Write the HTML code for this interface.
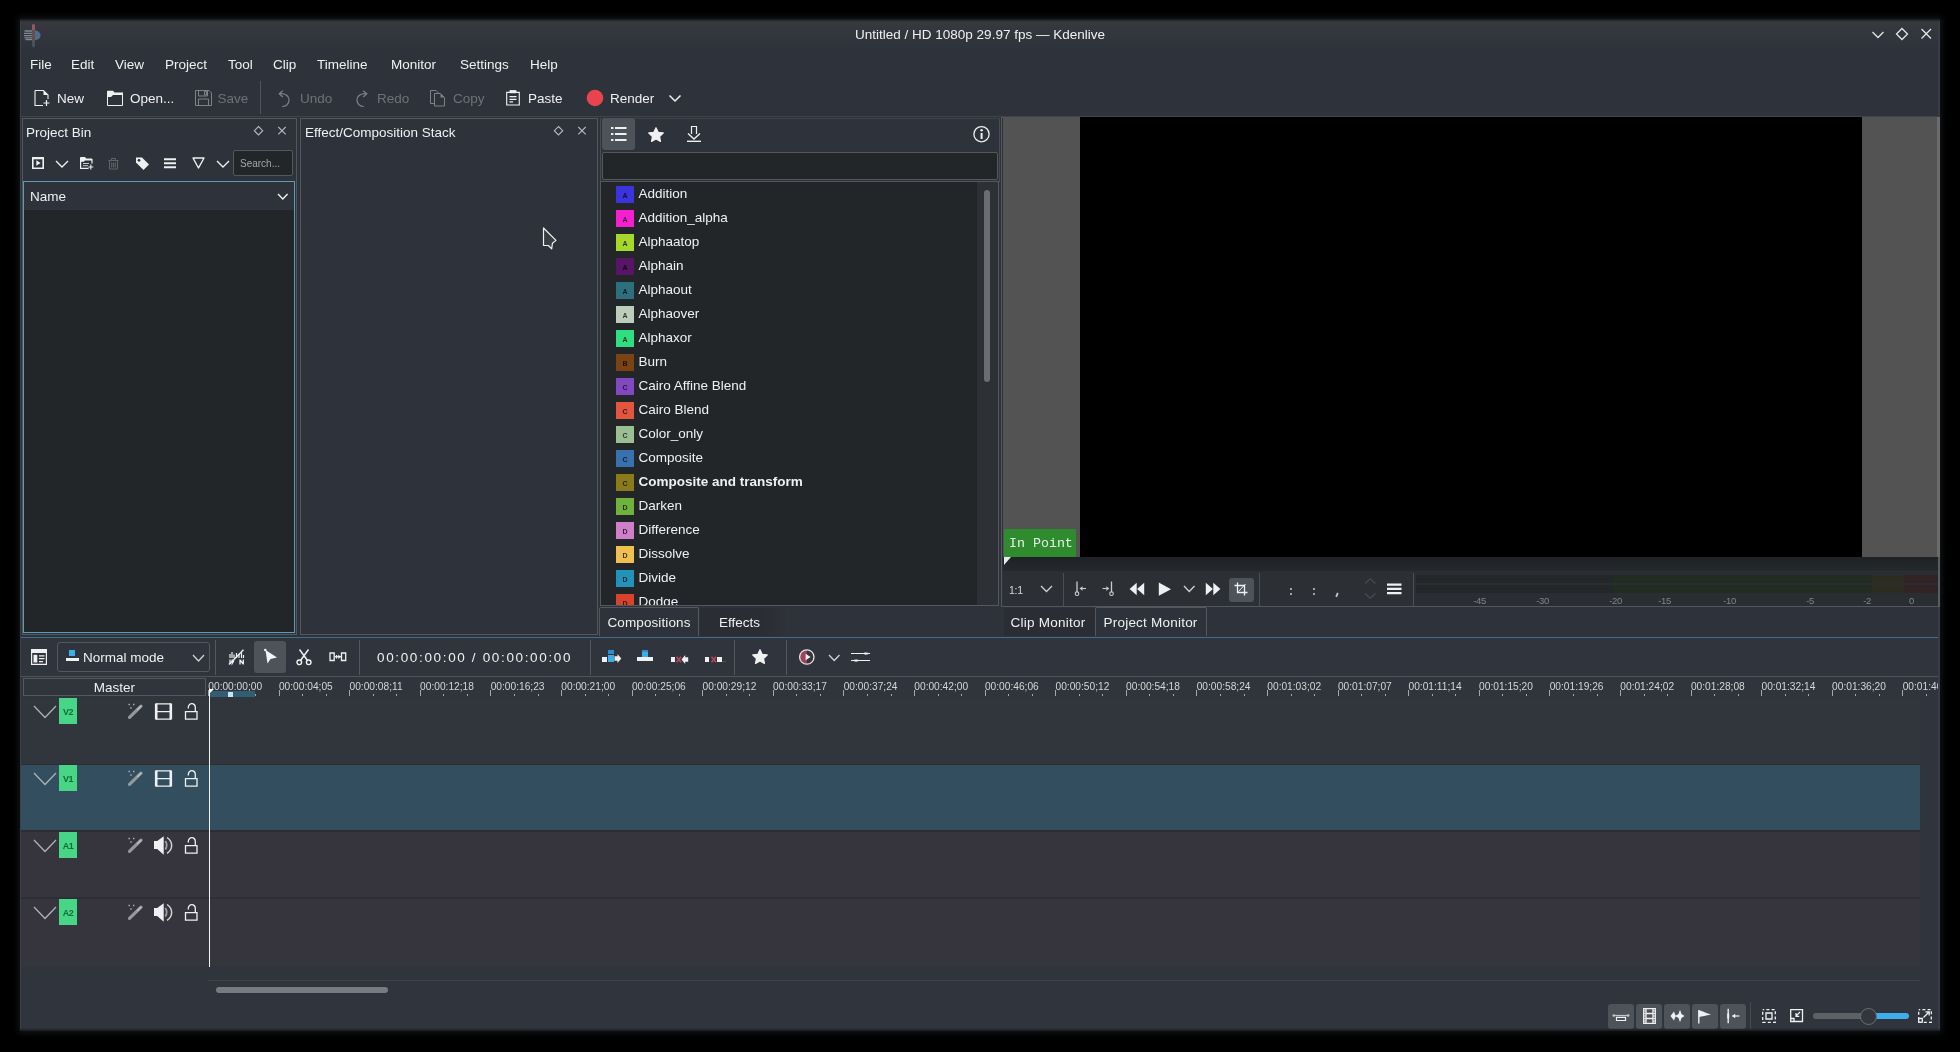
<!DOCTYPE html>
<html><head><meta charset="utf-8"><title>Kdenlive</title>
<style>
html,body{margin:0;padding:0;background:#000;}
body{width:1960px;height:1052px;overflow:hidden;position:relative;font-family:"Liberation Sans",sans-serif;}
div,svg{position:absolute;box-sizing:border-box;}
.t{white-space:nowrap;line-height:16px;height:16px;}
svg{overflow:visible;}
#root{left:0;top:0;width:1960px;height:1052px;will-change:transform;}
</style></head><body><div id="root">
<div style="left:20px;top:19px;width:1920px;height:1012px;background:#2e323a;box-shadow:0 0 6px 2px rgba(20,22,24,.9);"></div>
<div style="left:20px;top:19px;width:1920px;height:30px;background:linear-gradient(#373b40,#2e323a);"></div>
<div class="t" style="left:680px;top:27px;font-size:13.5px;color:#eff0f1;width:600px;text-align:center;">Untitled / HD 1080p 29.97 fps — Kdenlive</div>
<div class="t" style="left:30px;top:57px;font-size:13.5px;color:#eff0f1;">File</div>
<div class="t" style="left:71px;top:57px;font-size:13.5px;color:#eff0f1;">Edit</div>
<div class="t" style="left:115px;top:57px;font-size:13.5px;color:#eff0f1;">View</div>
<div class="t" style="left:165px;top:57px;font-size:13.5px;color:#eff0f1;">Project</div>
<div class="t" style="left:228px;top:57px;font-size:13.5px;color:#eff0f1;">Tool</div>
<div class="t" style="left:273px;top:57px;font-size:13.5px;color:#eff0f1;">Clip</div>
<div class="t" style="left:317px;top:57px;font-size:13.5px;color:#eff0f1;">Timeline</div>
<div class="t" style="left:391px;top:57px;font-size:13.5px;color:#eff0f1;">Monitor</div>
<div class="t" style="left:460px;top:57px;font-size:13.5px;color:#eff0f1;">Settings</div>
<div class="t" style="left:530px;top:57px;font-size:13.5px;color:#eff0f1;">Help</div>
<div class="t" style="left:57px;top:91px;font-size:13.5px;color:#eff0f1;">New</div>
<div class="t" style="left:130px;top:91px;font-size:13.5px;color:#eff0f1;">Open...</div>
<div class="t" style="left:217.5px;top:91px;font-size:13.5px;color:#6e7276;">Save</div>
<div class="t" style="left:300px;top:91px;font-size:13.5px;color:#6e7276;">Undo</div>
<div class="t" style="left:377px;top:91px;font-size:13.5px;color:#6e7276;">Redo</div>
<div class="t" style="left:453px;top:91px;font-size:13.5px;color:#6e7276;">Copy</div>
<div class="t" style="left:528px;top:91px;font-size:13.5px;color:#eff0f1;">Paste</div>
<div class="t" style="left:610px;top:91px;font-size:13.5px;color:#eff0f1;">Render</div>
<div style="left:260px;top:81px;width:1px;height:33px;background:#50555b;"></div>
<div style="left:20px;top:116px;width:1920px;height:1px;background:#3f4449;"></div>
<div style="left:22px;top:118px;width:275px;height:517px;border:1px solid #54585c;"></div>
<div class="t" style="left:26px;top:125px;font-size:13.5px;color:#eff0f1;">Project Bin</div>
<div style="left:233px;top:150px;width:60px;height:26px;background:#232629;border:1px solid #54585c;border-radius:2px;"></div>
<div class="t" style="left:240px;top:155.5px;font-size:10px;color:#a3a6a9;">Search...</div>
<div style="left:23px;top:181px;width:272px;height:452px;background:#232629;border:1px solid #5f9ab5;"></div>
<div style="left:24px;top:182px;width:270px;height:28px;background:#2e323a;"></div>
<div class="t" style="left:30px;top:189px;font-size:13.5px;color:#eff0f1;">Name</div>
<div style="left:300px;top:118px;width:298px;height:517px;border:1px solid #54585c;"></div>
<div class="t" style="left:305px;top:125px;font-size:13.5px;color:#eff0f1;">Effect/Composition Stack</div>
<div style="left:600px;top:118px;width:1px;height:64px;background:#484c52;"></div>
<div style="left:999px;top:118px;width:1px;height:64px;background:#484c52;"></div>
<div style="left:600px;top:118px;width:400px;height:1px;background:#3f4349;"></div>
<div style="left:602px;top:118px;width:33px;height:32px;background:#4e535a;border-radius:3px;"></div>
<div style="left:602px;top:152px;width:396px;height:28px;background:#232629;border:1px solid #54585c;border-radius:2px;"></div>
<div style="left:600px;top:181px;width:399px;height:425px;border:1px solid #54585c;"></div>
<div style="left:601px;top:182px;width:376px;height:423px;background:#232629;"></div>
<div style="left:977px;top:182px;width:21px;height:423px;background:#2d3135;"></div>
<div style="left:984px;top:190px;width:6px;height:192px;background:#6a6e72;border-radius:3px;"></div>
<div style="left:601px;top:182px;width:376px;height:423px;overflow:hidden;">
<div style="left:15px;top:4px;width:18px;height:17px;background:#3b34dd;"></div>
<div class="t" style="left:15px;width:18px;text-align:center;top:8.5px;font-size:7px;font-weight:bold;color:rgba(0,0,0,.75);line-height:9px;height:9px;">A</div>
<div class="t" style="left:37.5px;top:4px;font-size:13.5px;color:#eff0f1;">Addition</div>
<div style="left:15px;top:28px;width:18px;height:17px;background:#f31fd0;"></div>
<div class="t" style="left:15px;width:18px;text-align:center;top:32.5px;font-size:7px;font-weight:bold;color:rgba(0,0,0,.75);line-height:9px;height:9px;">A</div>
<div class="t" style="left:37.5px;top:28px;font-size:13.5px;color:#eff0f1;">Addition_alpha</div>
<div style="left:15px;top:52px;width:18px;height:17px;background:#a6d82c;"></div>
<div class="t" style="left:15px;width:18px;text-align:center;top:56.5px;font-size:7px;font-weight:bold;color:rgba(0,0,0,.75);line-height:9px;height:9px;">A</div>
<div class="t" style="left:37.5px;top:52px;font-size:13.5px;color:#eff0f1;">Alphaatop</div>
<div style="left:15px;top:76px;width:18px;height:17px;background:#571566;"></div>
<div class="t" style="left:15px;width:18px;text-align:center;top:80.5px;font-size:7px;font-weight:bold;color:rgba(0,0,0,.75);line-height:9px;height:9px;">A</div>
<div class="t" style="left:37.5px;top:76px;font-size:13.5px;color:#eff0f1;">Alphain</div>
<div style="left:15px;top:100px;width:18px;height:17px;background:#2d6f7d;"></div>
<div class="t" style="left:15px;width:18px;text-align:center;top:104.5px;font-size:7px;font-weight:bold;color:rgba(0,0,0,.75);line-height:9px;height:9px;">A</div>
<div class="t" style="left:37.5px;top:100px;font-size:13.5px;color:#eff0f1;">Alphaout</div>
<div style="left:15px;top:124px;width:18px;height:17px;background:#bdcdbb;"></div>
<div class="t" style="left:15px;width:18px;text-align:center;top:128.5px;font-size:7px;font-weight:bold;color:rgba(0,0,0,.75);line-height:9px;height:9px;">A</div>
<div class="t" style="left:37.5px;top:124px;font-size:13.5px;color:#eff0f1;">Alphaover</div>
<div style="left:15px;top:148px;width:18px;height:17px;background:#2fde80;"></div>
<div class="t" style="left:15px;width:18px;text-align:center;top:152.5px;font-size:7px;font-weight:bold;color:rgba(0,0,0,.75);line-height:9px;height:9px;">A</div>
<div class="t" style="left:37.5px;top:148px;font-size:13.5px;color:#eff0f1;">Alphaxor</div>
<div style="left:15px;top:172px;width:18px;height:17px;background:#7a4313;"></div>
<div class="t" style="left:15px;width:18px;text-align:center;top:176.5px;font-size:7px;font-weight:bold;color:rgba(0,0,0,.75);line-height:9px;height:9px;">B</div>
<div class="t" style="left:37.5px;top:172px;font-size:13.5px;color:#eff0f1;">Burn</div>
<div style="left:15px;top:196px;width:18px;height:17px;background:#8148c0;"></div>
<div class="t" style="left:15px;width:18px;text-align:center;top:200.5px;font-size:7px;font-weight:bold;color:rgba(0,0,0,.75);line-height:9px;height:9px;">C</div>
<div class="t" style="left:37.5px;top:196px;font-size:13.5px;color:#eff0f1;">Cairo Affine Blend</div>
<div style="left:15px;top:220px;width:18px;height:17px;background:#e2553e;"></div>
<div class="t" style="left:15px;width:18px;text-align:center;top:224.5px;font-size:7px;font-weight:bold;color:rgba(0,0,0,.75);line-height:9px;height:9px;">C</div>
<div class="t" style="left:37.5px;top:220px;font-size:13.5px;color:#eff0f1;">Cairo Blend</div>
<div style="left:15px;top:244px;width:18px;height:17px;background:#9bbf93;"></div>
<div class="t" style="left:15px;width:18px;text-align:center;top:248.5px;font-size:7px;font-weight:bold;color:rgba(0,0,0,.75);line-height:9px;height:9px;">C</div>
<div class="t" style="left:37.5px;top:244px;font-size:13.5px;color:#eff0f1;">Color_only</div>
<div style="left:15px;top:268px;width:18px;height:17px;background:#3870b0;"></div>
<div class="t" style="left:15px;width:18px;text-align:center;top:272.5px;font-size:7px;font-weight:bold;color:rgba(0,0,0,.75);line-height:9px;height:9px;">C</div>
<div class="t" style="left:37.5px;top:268px;font-size:13.5px;color:#eff0f1;">Composite</div>
<div style="left:15px;top:292px;width:18px;height:17px;background:#8a7a1a;"></div>
<div class="t" style="left:15px;width:18px;text-align:center;top:296.5px;font-size:7px;font-weight:bold;color:rgba(0,0,0,.75);line-height:9px;height:9px;">C</div>
<div class="t" style="left:37.5px;top:292px;font-size:13.5px;color:#eff0f1;font-weight:bold;">Composite and transform</div>
<div style="left:15px;top:316px;width:18px;height:17px;background:#6fb33c;"></div>
<div class="t" style="left:15px;width:18px;text-align:center;top:320.5px;font-size:7px;font-weight:bold;color:rgba(0,0,0,.75);line-height:9px;height:9px;">D</div>
<div class="t" style="left:37.5px;top:316px;font-size:13.5px;color:#eff0f1;">Darken</div>
<div style="left:15px;top:340px;width:18px;height:17px;background:#cf7fca;"></div>
<div class="t" style="left:15px;width:18px;text-align:center;top:344.5px;font-size:7px;font-weight:bold;color:rgba(0,0,0,.75);line-height:9px;height:9px;">D</div>
<div class="t" style="left:37.5px;top:340px;font-size:13.5px;color:#eff0f1;">Difference</div>
<div style="left:15px;top:364px;width:18px;height:17px;background:#efbf4f;"></div>
<div class="t" style="left:15px;width:18px;text-align:center;top:368.5px;font-size:7px;font-weight:bold;color:rgba(0,0,0,.75);line-height:9px;height:9px;">D</div>
<div class="t" style="left:37.5px;top:364px;font-size:13.5px;color:#eff0f1;">Dissolve</div>
<div style="left:15px;top:388px;width:18px;height:17px;background:#2392b8;"></div>
<div class="t" style="left:15px;width:18px;text-align:center;top:392.5px;font-size:7px;font-weight:bold;color:rgba(0,0,0,.75);line-height:9px;height:9px;">D</div>
<div class="t" style="left:37.5px;top:388px;font-size:13.5px;color:#eff0f1;">Divide</div>
<div style="left:15px;top:412px;width:18px;height:17px;background:#d8432c;"></div>
<div class="t" style="left:15px;width:18px;text-align:center;top:416.5px;font-size:7px;font-weight:bold;color:rgba(0,0,0,.75);line-height:9px;height:9px;">D</div>
<div class="t" style="left:37.5px;top:412px;font-size:13.5px;color:#eff0f1;">Dodge</div>
</div>
<div style="left:599px;top:607px;width:100px;height:29px;border:1px solid #54585c;border-bottom:none;border-radius:2px 2px 0 0;"></div>
<div style="left:700px;top:608px;width:90px;height:28px;background:linear-gradient(90deg,#2a2d33 70%,#2f333a);"></div>
<div class="t" style="left:607.5px;top:615px;font-size:13.5px;color:#eff0f1;letter-spacing:0.1px;">Compositions</div>
<div class="t" style="left:719px;top:615px;font-size:13.5px;color:#eff0f1;">Effects</div>
<div style="left:1001px;top:117px;width:938px;height:490px;border:1px solid #54585c;"></div>
<div style="left:1003px;top:117px;width:936px;height:440px;background:#535353;"></div>
<div style="left:1080px;top:117px;width:782px;height:440px;background:#000;"></div>
<div style="left:1004px;top:529px;width:72px;height:28px;background:#2e8b2e;"></div>
<div class="t" style="left:1009px;top:536px;font-size:13.3px;color:#e8f5e8;font-family:'Liberation Mono',monospace;">In Point</div>
<div style="left:1003px;top:557px;width:936px;height:14px;background:linear-gradient(#1f2224,#26292c);"></div>
<div style="left:1003px;top:571px;width:936px;height:35px;background:#2c3034;"></div>
<div style="left:1414px;top:572px;width:525px;height:34px;background:#2a2e32;"></div>
<div style="left:1229px;top:578px;width:25px;height:24px;background:#4e535a;border-radius:3px;"></div>
<div style="left:1004px;top:608px;width:91px;height:28px;background:#2a2d33;"></div>
<div class="t" style="left:1010.5px;top:615px;font-size:13.5px;color:#eff0f1;letter-spacing:0.25px;">Clip Monitor</div>
<div style="left:1095px;top:607px;width:112px;height:29px;border:1px solid #54585c;border-bottom:none;border-radius:2px 2px 0 0;"></div>
<div class="t" style="left:1103.5px;top:615px;font-size:13.5px;color:#eff0f1;letter-spacing:0.22px;">Project Monitor</div>
<div style="left:20px;top:638px;width:1920px;height:393px;background:#30343c;"></div>
<div style="left:20px;top:637px;width:1920px;height:1px;background:#3f6f8e;"></div>
<div style="left:57px;top:642px;width:153px;height:30px;border:1px solid #54585c;border-radius:3px;"></div>
<div class="t" style="left:83px;top:650px;font-size:13.5px;color:#eff0f1;">Normal mode</div>
<div style="left:254px;top:641px;width:32px;height:32px;background:#4e535a;border-radius:3px;"></div>
<div class="t" style="left:377px;top:650px;font-size:13.5px;color:#eff0f1;letter-spacing:1.65px;">00:00:00:00 / 00:00:00:00</div>
<div style="left:215px;top:640px;width:1px;height:35px;background:#53585d;"></div>
<div style="left:359px;top:640px;width:1px;height:35px;background:#53585d;"></div>
<div style="left:590px;top:640px;width:1px;height:35px;background:#53585d;"></div>
<div style="left:734px;top:640px;width:1px;height:35px;background:#53585d;"></div>
<div style="left:786px;top:640px;width:1px;height:35px;background:#53585d;"></div>
<div style="left:20px;top:676px;width:1920px;height:1px;background:#4f5459;"></div>
<div style="left:23px;top:678px;width:183px;height:18px;border:1px solid #54585c;"></div>
<div class="t" style="left:23px;top:680px;font-size:13.5px;color:#eff0f1;width:183px;text-align:center;">Master</div>
<div style="left:20px;top:698px;width:1900px;height:66px;background:#31353c;"></div>
<div style="left:20px;top:764px;width:1900px;height:1px;background:#2a2e32;"></div>
<div style="left:20px;top:765px;width:1900px;height:65px;background:#334e5e;"></div>
<div style="left:20px;top:830px;width:1900px;height:2px;background:#2a2e33;"></div>
<div style="left:20px;top:832px;width:1900px;height:65px;background:#36353e;"></div>
<div style="left:20px;top:897px;width:1900px;height:2px;background:#2d2e36;"></div>
<div style="left:20px;top:899px;width:1900px;height:62px;background:#36353e;"></div>
<div style="left:20px;top:961px;width:1900px;height:5px;background:#33363d;"></div>
<div style="left:208.8px;top:689px;width:1.6px;height:278px;background:#f2f3f4;"></div>
<div style="left:208px;top:678px;width:1732px;height:20px;overflow:hidden;">
<div class="t" style="left:0.3px;top:1px;font-size:10.2px;color:#d4d6d8;">00:00:00;00</div>
<div style="left:0.0px;top:11.5px;width:1px;height:6.5px;background:#a4a7aa;"></div>
<div style="left:23.5px;top:15.5px;width:1px;height:2.5px;background:#a4a7aa;"></div>
<div style="left:47.1px;top:15.5px;width:1px;height:2.5px;background:#a4a7aa;"></div>
<div class="t" style="left:70.9px;top:1px;font-size:10.2px;color:#d4d6d8;">00:00:04;05</div>
<div style="left:70.6px;top:11.5px;width:1px;height:6.5px;background:#a4a7aa;"></div>
<div style="left:94.1px;top:15.5px;width:1px;height:2.5px;background:#a4a7aa;"></div>
<div style="left:117.7px;top:15.5px;width:1px;height:2.5px;background:#a4a7aa;"></div>
<div class="t" style="left:141.5px;top:1px;font-size:10.2px;color:#d4d6d8;">00:00:08;11</div>
<div style="left:141.2px;top:11.5px;width:1px;height:6.5px;background:#a4a7aa;"></div>
<div style="left:164.7px;top:15.5px;width:1px;height:2.5px;background:#a4a7aa;"></div>
<div style="left:188.3px;top:15.5px;width:1px;height:2.5px;background:#a4a7aa;"></div>
<div class="t" style="left:212.1px;top:1px;font-size:10.2px;color:#d4d6d8;">00:00:12;18</div>
<div style="left:211.8px;top:11.5px;width:1px;height:6.5px;background:#a4a7aa;"></div>
<div style="left:235.3px;top:15.5px;width:1px;height:2.5px;background:#a4a7aa;"></div>
<div style="left:258.9px;top:15.5px;width:1px;height:2.5px;background:#a4a7aa;"></div>
<div class="t" style="left:282.7px;top:1px;font-size:10.2px;color:#d4d6d8;">00:00:16;23</div>
<div style="left:282.4px;top:11.5px;width:1px;height:6.5px;background:#a4a7aa;"></div>
<div style="left:305.9px;top:15.5px;width:1px;height:2.5px;background:#a4a7aa;"></div>
<div style="left:329.5px;top:15.5px;width:1px;height:2.5px;background:#a4a7aa;"></div>
<div class="t" style="left:353.3px;top:1px;font-size:10.2px;color:#d4d6d8;">00:00:21;00</div>
<div style="left:353.0px;top:11.5px;width:1px;height:6.5px;background:#a4a7aa;"></div>
<div style="left:376.5px;top:15.5px;width:1px;height:2.5px;background:#a4a7aa;"></div>
<div style="left:400.1px;top:15.5px;width:1px;height:2.5px;background:#a4a7aa;"></div>
<div class="t" style="left:423.9px;top:1px;font-size:10.2px;color:#d4d6d8;">00:00:25;06</div>
<div style="left:423.6px;top:11.5px;width:1px;height:6.5px;background:#a4a7aa;"></div>
<div style="left:447.1px;top:15.5px;width:1px;height:2.5px;background:#a4a7aa;"></div>
<div style="left:470.7px;top:15.5px;width:1px;height:2.5px;background:#a4a7aa;"></div>
<div class="t" style="left:494.5px;top:1px;font-size:10.2px;color:#d4d6d8;">00:00:29;12</div>
<div style="left:494.2px;top:11.5px;width:1px;height:6.5px;background:#a4a7aa;"></div>
<div style="left:517.7px;top:15.5px;width:1px;height:2.5px;background:#a4a7aa;"></div>
<div style="left:541.3px;top:15.5px;width:1px;height:2.5px;background:#a4a7aa;"></div>
<div class="t" style="left:565.1px;top:1px;font-size:10.2px;color:#d4d6d8;">00:00:33;17</div>
<div style="left:564.8px;top:11.5px;width:1px;height:6.5px;background:#a4a7aa;"></div>
<div style="left:588.3px;top:15.5px;width:1px;height:2.5px;background:#a4a7aa;"></div>
<div style="left:611.9px;top:15.5px;width:1px;height:2.5px;background:#a4a7aa;"></div>
<div class="t" style="left:635.7px;top:1px;font-size:10.2px;color:#d4d6d8;">00:00:37;24</div>
<div style="left:635.4px;top:11.5px;width:1px;height:6.5px;background:#a4a7aa;"></div>
<div style="left:658.9px;top:15.5px;width:1px;height:2.5px;background:#a4a7aa;"></div>
<div style="left:682.5px;top:15.5px;width:1px;height:2.5px;background:#a4a7aa;"></div>
<div class="t" style="left:706.3px;top:1px;font-size:10.2px;color:#d4d6d8;">00:00:42;00</div>
<div style="left:706.0px;top:11.5px;width:1px;height:6.5px;background:#a4a7aa;"></div>
<div style="left:729.5px;top:15.5px;width:1px;height:2.5px;background:#a4a7aa;"></div>
<div style="left:753.1px;top:15.5px;width:1px;height:2.5px;background:#a4a7aa;"></div>
<div class="t" style="left:776.9px;top:1px;font-size:10.2px;color:#d4d6d8;">00:00:46;06</div>
<div style="left:776.6px;top:11.5px;width:1px;height:6.5px;background:#a4a7aa;"></div>
<div style="left:800.1px;top:15.5px;width:1px;height:2.5px;background:#a4a7aa;"></div>
<div style="left:823.7px;top:15.5px;width:1px;height:2.5px;background:#a4a7aa;"></div>
<div class="t" style="left:847.5px;top:1px;font-size:10.2px;color:#d4d6d8;">00:00:50;12</div>
<div style="left:847.2px;top:11.5px;width:1px;height:6.5px;background:#a4a7aa;"></div>
<div style="left:870.7px;top:15.5px;width:1px;height:2.5px;background:#a4a7aa;"></div>
<div style="left:894.3px;top:15.5px;width:1px;height:2.5px;background:#a4a7aa;"></div>
<div class="t" style="left:918.1px;top:1px;font-size:10.2px;color:#d4d6d8;">00:00:54;18</div>
<div style="left:917.8px;top:11.5px;width:1px;height:6.5px;background:#a4a7aa;"></div>
<div style="left:941.3px;top:15.5px;width:1px;height:2.5px;background:#a4a7aa;"></div>
<div style="left:964.9px;top:15.5px;width:1px;height:2.5px;background:#a4a7aa;"></div>
<div class="t" style="left:988.7px;top:1px;font-size:10.2px;color:#d4d6d8;">00:00:58;24</div>
<div style="left:988.4px;top:11.5px;width:1px;height:6.5px;background:#a4a7aa;"></div>
<div style="left:1011.9px;top:15.5px;width:1px;height:2.5px;background:#a4a7aa;"></div>
<div style="left:1035.5px;top:15.5px;width:1px;height:2.5px;background:#a4a7aa;"></div>
<div class="t" style="left:1059.3px;top:1px;font-size:10.2px;color:#d4d6d8;">00:01:03;02</div>
<div style="left:1059.0px;top:11.5px;width:1px;height:6.5px;background:#a4a7aa;"></div>
<div style="left:1082.5px;top:15.5px;width:1px;height:2.5px;background:#a4a7aa;"></div>
<div style="left:1106.1px;top:15.5px;width:1px;height:2.5px;background:#a4a7aa;"></div>
<div class="t" style="left:1129.9px;top:1px;font-size:10.2px;color:#d4d6d8;">00:01:07;07</div>
<div style="left:1129.6px;top:11.5px;width:1px;height:6.5px;background:#a4a7aa;"></div>
<div style="left:1153.1px;top:15.5px;width:1px;height:2.5px;background:#a4a7aa;"></div>
<div style="left:1176.7px;top:15.5px;width:1px;height:2.5px;background:#a4a7aa;"></div>
<div class="t" style="left:1200.5px;top:1px;font-size:10.2px;color:#d4d6d8;">00:01:11;14</div>
<div style="left:1200.2px;top:11.5px;width:1px;height:6.5px;background:#a4a7aa;"></div>
<div style="left:1223.7px;top:15.5px;width:1px;height:2.5px;background:#a4a7aa;"></div>
<div style="left:1247.3px;top:15.5px;width:1px;height:2.5px;background:#a4a7aa;"></div>
<div class="t" style="left:1271.1px;top:1px;font-size:10.2px;color:#d4d6d8;">00:01:15;20</div>
<div style="left:1270.8px;top:11.5px;width:1px;height:6.5px;background:#a4a7aa;"></div>
<div style="left:1294.3px;top:15.5px;width:1px;height:2.5px;background:#a4a7aa;"></div>
<div style="left:1317.9px;top:15.5px;width:1px;height:2.5px;background:#a4a7aa;"></div>
<div class="t" style="left:1341.7px;top:1px;font-size:10.2px;color:#d4d6d8;">00:01:19;26</div>
<div style="left:1341.4px;top:11.5px;width:1px;height:6.5px;background:#a4a7aa;"></div>
<div style="left:1364.9px;top:15.5px;width:1px;height:2.5px;background:#a4a7aa;"></div>
<div style="left:1388.5px;top:15.5px;width:1px;height:2.5px;background:#a4a7aa;"></div>
<div class="t" style="left:1412.3px;top:1px;font-size:10.2px;color:#d4d6d8;">00:01:24;02</div>
<div style="left:1412.0px;top:11.5px;width:1px;height:6.5px;background:#a4a7aa;"></div>
<div style="left:1435.5px;top:15.5px;width:1px;height:2.5px;background:#a4a7aa;"></div>
<div style="left:1459.1px;top:15.5px;width:1px;height:2.5px;background:#a4a7aa;"></div>
<div class="t" style="left:1482.9px;top:1px;font-size:10.2px;color:#d4d6d8;">00:01:28;08</div>
<div style="left:1482.6px;top:11.5px;width:1px;height:6.5px;background:#a4a7aa;"></div>
<div style="left:1506.1px;top:15.5px;width:1px;height:2.5px;background:#a4a7aa;"></div>
<div style="left:1529.7px;top:15.5px;width:1px;height:2.5px;background:#a4a7aa;"></div>
<div class="t" style="left:1553.5px;top:1px;font-size:10.2px;color:#d4d6d8;">00:01:32;14</div>
<div style="left:1553.2px;top:11.5px;width:1px;height:6.5px;background:#a4a7aa;"></div>
<div style="left:1576.7px;top:15.5px;width:1px;height:2.5px;background:#a4a7aa;"></div>
<div style="left:1600.3px;top:15.5px;width:1px;height:2.5px;background:#a4a7aa;"></div>
<div class="t" style="left:1624.1px;top:1px;font-size:10.2px;color:#d4d6d8;">00:01:36;20</div>
<div style="left:1623.8px;top:11.5px;width:1px;height:6.5px;background:#a4a7aa;"></div>
<div style="left:1647.3px;top:15.5px;width:1px;height:2.5px;background:#a4a7aa;"></div>
<div style="left:1670.9px;top:15.5px;width:1px;height:2.5px;background:#a4a7aa;"></div>
<div class="t" style="left:1694.7px;top:1px;font-size:10.2px;color:#d4d6d8;">00:01:40;26</div>
<div style="left:1694.4px;top:11.5px;width:1px;height:6.5px;background:#a4a7aa;"></div>
<div style="left:1717.9px;top:15.5px;width:1px;height:2.5px;background:#a4a7aa;"></div>
<div style="left:1741.5px;top:15.5px;width:1px;height:2.5px;background:#a4a7aa;"></div>
</div>
<div style="left:58.7px;top:697.5px;width:18.8px;height:26.5px;background:#48d585;"></div>
<div class="t" style="left:58px;top:704px;font-size:9px;color:#0d7036;width:20px;letter-spacing:-0.4px;font-weight:bold;text-align:center;">V2</div>
<div style="left:58.7px;top:764.5px;width:18.8px;height:26.5px;background:#48d585;"></div>
<div class="t" style="left:58px;top:771px;font-size:9px;color:#0d7036;width:20px;letter-spacing:-0.4px;font-weight:bold;text-align:center;">V1</div>
<div style="left:58.7px;top:831.5px;width:18.8px;height:26.5px;background:#48d585;"></div>
<div class="t" style="left:58px;top:838px;font-size:9px;color:#0d7036;width:20px;letter-spacing:-0.4px;font-weight:bold;text-align:center;">A1</div>
<div style="left:58.7px;top:898.5px;width:18.8px;height:26.5px;background:#48d585;"></div>
<div class="t" style="left:58px;top:905px;font-size:9px;color:#0d7036;width:20px;letter-spacing:-0.4px;font-weight:bold;text-align:center;">A2</div>
<div style="left:208px;top:979.5px;width:1712px;height:1px;background:#3d4247;"></div>
<div style="left:216px;top:986.7px;width:172px;height:6.3px;background:#767b82;border-radius:3px;"></div>
<div style="left:1608px;top:1004px;width:26px;height:25px;background:#4e535a;border-radius:3px;"></div>
<div style="left:1636px;top:1004px;width:26px;height:25px;background:#4e535a;border-radius:3px;"></div>
<div style="left:1664px;top:1004px;width:26px;height:25px;background:#4e535a;border-radius:3px;"></div>
<div style="left:1692px;top:1004px;width:26px;height:25px;background:#4e535a;border-radius:3px;"></div>
<div style="left:1720px;top:1004px;width:26px;height:25px;background:#4e535a;border-radius:3px;"></div>
<div style="left:1750px;top:1002px;width:1px;height:28px;background:#474c51;"></div>
<div style="left:1813px;top:1013px;width:56px;height:6px;background:#5d6165;border-radius:3px;"></div>
<div style="left:1869px;top:1013px;width:40px;height:6px;background:#3daee9;border-radius:3px;"></div>
<div style="left:1860px;top:1008px;width:17px;height:17px;background:#33373d;border:1.5px solid #6a6e72;border-radius:50%;"></div>
<svg style="left:277px;top:193px;" width="12" height="8" viewBox="0 0 12 8"><path d="M1 1 L5.800 6 L10.600 1" fill="none" stroke="#eff0f1" stroke-width="1.4"/></svg>
<svg style="left:1004px;top:557px;" width="8" height="9" viewBox="0 0 8 9"><path d="M0 0h7L0 8z" fill="#e9eaeb"/></svg>
<div style="left:1416px;top:575px;width:522px;height:8px;background:#23272a;"></div>
<div style="left:1416px;top:585px;width:522px;height:8px;background:#23272a;"></div>
<div style="left:1613px;top:575px;width:259px;height:8px;background:#212c22;"></div>
<div style="left:1613px;top:585px;width:259px;height:8px;background:#212c22;"></div>
<div style="left:1872px;top:575px;width:32px;height:8px;background:#2d2c20;"></div>
<div style="left:1872px;top:585px;width:32px;height:8px;background:#2d2c20;"></div>
<div style="left:1904px;top:575px;width:33px;height:8px;background:#322426;"></div>
<div style="left:1904px;top:585px;width:33px;height:8px;background:#322426;"></div>
<div class="t" style="left:1446px;top:592.5px;font-size:9.5px;color:#80848a;width:40px;letter-spacing:-0.3px;text-align:right;">-45</div>
<div class="t" style="left:1509px;top:592.5px;font-size:9.5px;color:#80848a;width:40px;letter-spacing:-0.3px;text-align:right;">-30</div>
<div class="t" style="left:1582px;top:592.5px;font-size:9.5px;color:#80848a;width:40px;letter-spacing:-0.3px;text-align:right;">-20</div>
<div class="t" style="left:1631px;top:592.5px;font-size:9.5px;color:#80848a;width:40px;letter-spacing:-0.3px;text-align:right;">-15</div>
<div class="t" style="left:1696px;top:592.5px;font-size:9.5px;color:#80848a;width:40px;letter-spacing:-0.3px;text-align:right;">-10</div>
<div class="t" style="left:1774px;top:592.5px;font-size:9.5px;color:#80848a;width:40px;letter-spacing:-0.3px;text-align:right;">-5</div>
<div class="t" style="left:1831px;top:592.5px;font-size:9.5px;color:#80848a;width:40px;letter-spacing:-0.3px;text-align:right;">-2</div>
<div class="t" style="left:1874px;top:592.5px;font-size:9.5px;color:#80848a;width:40px;letter-spacing:-0.3px;text-align:right;">0</div>
<div style="left:20px;top:19px;width:1px;height:1012px;background:#3d4145;"></div>
<div style="left:1938px;top:19px;width:2px;height:1012px;background:#393d42;"></div>
<div style="left:1937px;top:117px;width:3px;height:440px;background:#6b6b6b;"></div>
<div style="left:1938px;top:557px;width:2px;height:50px;background:#5a5d60;"></div>
<div style="left:20px;top:1028px;width:1920px;height:3px;background:linear-gradient(rgba(16,18,20,0),rgba(16,18,20,.75));"></div>
<div style="left:20px;top:19px;width:1920px;height:3px;background:linear-gradient(rgba(14,16,18,.8),rgba(14,16,18,0));"></div>
<svg style="left:20px;top:20px;opacity:.78;" width="26" height="30" viewBox="0 0 26 30"><path d="M4.500 11h7.500M4 13.300h8M4 15.600h8M4.500 17.900h7.500M5.500 19.700h6.500" stroke="#b9c7d1" stroke-width="1.300" opacity=".75"/><path d="M15 10.200c3.500 .6 5.700 2.600 5.600 5.500-.2 2.600-2.400 4.200-5.600 4.400z" fill="#5f88b8" opacity=".85"/><path d="M12 4.500h3v21l-1.500 2.200-1.500-2.200z" fill="#7a5a50" opacity=".9"/><rect x="12" y="4.500" width="3" height="5.500" fill="#b8616a" opacity=".9"/><path d="M12 22h3v3.500l-1.500 2.200-1.500-2.200z" fill="#3f5f6e" opacity=".8"/></svg>
<svg style="left:1868px;top:24px;" width="70" height="20" viewBox="0 0 70 20"><path d="M4.5 8 L10 13.5 L15.5 8" fill="none" stroke="#e4e6e8" stroke-width="1.3" /><path d="M34 4.5 L39.5 10 L34 15.5 L28.5 10z" fill="none" stroke="#e4e6e8" stroke-width="1.3" /><path d="M53.5 5 L63 14.5 M63 5 L53.5 14.5" fill="none" stroke="#e4e6e8" stroke-width="1.3" /></svg>
<svg style="left:34px;top:90px;" width="16" height="16" viewBox="0 0 16 16"><path d="M1 .5h8.5l4.5 4.5v4M9 15.5H1V.5" fill="none" stroke="#eff0f1" stroke-width="1.1" /><path d="M9.5 .5v4.5h4.5z" fill="#eff0f1"/><path d="M12.5 10v6M9.500 13h6" fill="none" stroke="#eff0f1" stroke-width="1.2" /></svg>
<svg style="left:107px;top:90px;" width="16" height="16" viewBox="0 0 16 16"><path d="M.5 .8h5.5l1.5 1.7h8v2.5h-9.5l-2 2h-3.5z" fill="#eff0f1"/><path d="M.5 1v14.5h15V2.5" fill="none" stroke="#eff0f1" stroke-width="1" /></svg>
<svg style="left:195px;top:90px;" width="17" height="16" viewBox="0 0 17 16"><path d="M.5 .5h13.5l2.5 2.5v12.500h-16z" fill="none" stroke="#7d8287" stroke-width="1" /><path d="M3.500 .5v5.500h9v-5.500M9.5 1.5v3.500h2v-3.500zM3.500 15.500v-6.500h10v6.500" fill="none" stroke="#7d8287" stroke-width="1" /></svg>
<svg style="left:276px;top:89.5px;" width="16" height="17" viewBox="0 0 16 17"><path d="M3.500 3.800c5.200-.7 9.500 2 9.500 6.500 0 3.600-3 6.200-6.800 6.200" fill="none" stroke="#7d8287" stroke-width="1.2" /><path d="M6.800 .8 L3.200 3.800 6.800 7" fill="none" stroke="#7d8287" stroke-width="1.2" /></svg>
<svg style="left:354px;top:89.5px;" width="16" height="17" viewBox="0 0 16 17"><path d="M12.500 3.800c-5.200-.7-9.500 2-9.500 6.500 0 3.600 3 6.200 6.800 6.200" fill="none" stroke="#7d8287" stroke-width="1.2" /><path d="M9.200 .8 L12.800 3.800 9.200 7" fill="none" stroke="#7d8287" stroke-width="1.2" /></svg>
<svg style="left:430px;top:89.5px;" width="16" height="17" viewBox="0 0 16 17"><path d="M4.500 13.500h-4v-13h5.500l2.500 2.500" fill="none" stroke="#7d8287" stroke-width="1" /><path d="M4.500 3.500h6l4 4v8.500h-10z" fill="none" stroke="#7d8287" stroke-width="1" /><path d="M10.500 3.500v4h4z" fill="#7d8287"/></svg>
<svg style="left:506px;top:89.5px;" width="14" height="16" viewBox="0 0 16 18"><path d="M4.500 .5h7v2.500h-7z" fill="#eff0f1" stroke="#eff0f1"/><path d="M.8 2.500h14.400v14.500h-14.400z" fill="none" stroke="#eff0f1" stroke-width="1.3" /><path d="M4 7.500h8M4 10.500h8M4 13.500h4" fill="none" stroke="#eff0f1" stroke-width="1.3" /></svg>
<svg style="left:586px;top:89px;" width="18" height="18" viewBox="0 0 18 18"><circle cx="9" cy="9" r="8.300" fill="#e8444f"/></svg>
<svg style="left:668px;top:93px;" width="14" height="10" viewBox="0 0 14 10"><path d="M1.500 2.500 L7 8 L12.500 2.500" fill="none" stroke="#eff0f1" stroke-width="1.5" /></svg>
<svg style="left:254px;top:125.3px;" width="34" height="12" viewBox="0 0 34 12"><path d="M4.500 1.500 L8.700 5.700 L4.500 9.900 L.3 5.700z" fill="none" stroke="#b4b8bc" stroke-width="1.1" /><path d="M24.300 2 L31.700 9.400 M31.700 2 L24.300 9.400" fill="none" stroke="#b4b8bc" stroke-width="1.1" /></svg>
<svg style="left:554px;top:125.3px;" width="34" height="12" viewBox="0 0 34 12"><path d="M4.500 1.500 L8.700 5.700 L4.500 9.900 L.3 5.700z" fill="none" stroke="#b4b8bc" stroke-width="1.1" /><path d="M24.300 2 L31.700 9.400 M31.700 2 L24.300 9.400" fill="none" stroke="#b4b8bc" stroke-width="1.1" /></svg>
<svg style="left:32px;top:157px;" width="12" height="12" viewBox="0 0 12 12"><path d="M.8 .8h10.400v10.400H.8z" fill="none" stroke="#eff0f1" stroke-width="1.6" /><path d="M4.300 3.300 L8.600 6 L4.300 8.700z" fill="#eff0f1"/><path d="M1 1.500h10" fill="none" stroke="#eff0f1" stroke-width="1.6" /></svg>
<svg style="left:55px;top:160px;" width="14" height="8" viewBox="0 0 14 8"><path d="M1 1 L7.0 7 L13 1" fill="none" stroke="#eff0f1" stroke-width="1.4" /></svg>
<svg style="left:80px;top:156px;" width="14" height="14" viewBox="0 0 14 14"><path d="M.5 1h4.500l1.200 1.500h5.800v2h-7l-1.200 1.200h-3.300z" fill="#eff0f1"/><path d="M.6 1.500v10.800h8M12 3v4.500" fill="none" stroke="#eff0f1" stroke-width="1.2" /><path d="M10.800 8.500v5M8.300 11h5" fill="none" stroke="#eff0f1" stroke-width="1.1" /><path d="M3 7.500h6M3 9.700h5" fill="none" stroke="#eff0f1" stroke-width="1"  opacity=".8"/></svg>
<svg style="left:106px;top:156px;" width="14" height="14" viewBox="0 0 14 14"><path d="M2.500 4.500h10M5.500 4.500v-2h4v2M3.500 4.500v8.500h8v-8.500M5.700 6.500v5M7.500 6.500v5M9.300 6.500v5" fill="none" stroke="#5f6469" stroke-width="1" /></svg>
<svg style="left:135px;top:156px;" width="15" height="15" viewBox="0 0 15 15"><path d="M1 1.500h6l7 7-5.500 5.500-7.500-7.500z" fill="#eff0f1"/><circle cx="4" cy="4.300" r="1.400" fill="#2e323a"/></svg>
<svg style="left:164px;top:158px;" width="12" height="10" viewBox="0 0 12 10"><path d="M0 1.200h12M0 5.200h12M0 9.200h12" fill="none" stroke="#eff0f1" stroke-width="2" /></svg>
<svg style="left:192px;top:157px;" width="13" height="12" viewBox="0 0 13 12"><path d="M1 1h11l-5.500 10z" fill="none" stroke="#eff0f1" stroke-width="1.4"  stroke-linejoin="round"/></svg>
<svg style="left:216px;top:160px;" width="14" height="8" viewBox="0 0 14 8"><path d="M1 1 L7.0 7 L13 1" fill="none" stroke="#eff0f1" stroke-width="1.4" /></svg>
<svg style="left:609px;top:126px;" width="20" height="16" viewBox="0 0 20 16"><path d="M6 2h11.500M6 8h11.500M6 14h11.500" fill="none" stroke="#eff0f1" stroke-width="2.2" /><path d="M2 2h2.400M2 8h2.400M2 14h2.400" fill="none" stroke="#eff0f1" stroke-width="2.2" /></svg>
<svg style="left:646px;top:125px;" width="20" height="20" viewBox="0 0 20 20"><polygon points="10.00,2.70 12.17,7.31 17.23,7.95 13.52,11.44 14.47,16.45 10.00,14.00 5.53,16.45 6.48,11.44 2.77,7.95 7.83,7.31" fill="#eff0f1" stroke="#eff0f1" stroke-width="1.2" stroke-linejoin="round"/></svg>
<svg style="left:686px;top:125px;" width="16" height="18" viewBox="0 0 16 18"><path d="M5.500 9v-7.500h5v7.500" fill="none" stroke="#eff0f1" stroke-width="1.2" /><path d="M2 8.500 L8 14 L14 8.500" fill="none" stroke="#eff0f1" stroke-width="1.4" /><path d="M1 16.300h14" fill="none" stroke="#eff0f1" stroke-width="1.4" /></svg>
<svg style="left:972px;top:125px;" width="20" height="20" viewBox="0 0 20 20"><circle cx="9.500" cy="9.200" r="7.600" fill="none" stroke="#eff0f1" stroke-width="1.3" /><path d="M9.600 8v6" fill="none" stroke="#eff0f1" stroke-width="2" /><circle cx="9.600" cy="5.200" r="1.200" fill="#eff0f1"/></svg>
<div class="t" style="left:1009px;top:582px;font-size:10.5px;color:#d6d8da;letter-spacing:-0.3px;">1:1</div>
<svg style="left:1040px;top:585px;" width="13" height="7.5" viewBox="0 0 13 7.5"><path d="M1 1 L6.5 6.5 L12 1" fill="none" stroke="#d0d3d6" stroke-width="1.3" /></svg>
<svg style="left:1071px;top:580px;" width="18" height="18" viewBox="0 0 18 18"><path d="M6 1.500v10.500" fill="none" stroke="#c9ccd0" stroke-width="1.3" /><circle cx="6" cy="13.700" r="1.800" fill="none" stroke="#c9ccd0" stroke-width="1.1" /><path d="M8.500 8.500l3-2.200v4.400z" fill="#c9ccd0"/><path d="M11 8.500h4" fill="none" stroke="#c9ccd0" stroke-width="1.1" /></svg>
<svg style="left:1099px;top:580px;" width="18" height="18" viewBox="0 0 18 18"><path d="M12.500 1.500v10.500" fill="none" stroke="#c9ccd0" stroke-width="1.3" /><circle cx="12.500" cy="13.700" r="1.800" fill="none" stroke="#c9ccd0" stroke-width="1.1" /><path d="M10.300 8.500l-3-2.200v4.400z" fill="#c9ccd0"/><path d="M3.500 8.500h4" fill="none" stroke="#c9ccd0" stroke-width="1.1" /></svg>
<svg style="left:1129px;top:582px;" width="16" height="14" viewBox="0 0 16 14"><path d="M7.700 .8v12.400L.6 7zM15.200 .8v12.400L8.100 7z" fill="#eff0f1"/></svg>
<svg style="left:1158px;top:582px;" width="14" height="14" viewBox="0 0 14 14"><path d="M.8 .6v13.200L13 7.200z" fill="#eff0f1"/></svg>
<svg style="left:1183px;top:585px;" width="12.5" height="7.5" viewBox="0 0 12.5 7.5"><path d="M1 1 L6.25 6.5 L11.5 1" fill="none" stroke="#d0d3d6" stroke-width="1.3" /></svg>
<svg style="left:1205px;top:582px;" width="16" height="14" viewBox="0 0 16 14"><path d="M.8 .8v12.400L7.900 7zM8.300 .8v12.400L15.400 7z" fill="#eff0f1"/></svg>
<svg style="left:1234px;top:582px;" width="14" height="14" viewBox="0 0 14 14"><path d="M3.500 .5v10h10M.5 3.500h10v10" fill="none" stroke="#eff0f1" stroke-width="1.3" /><path d="M4.500 9.500 L11.500 2" fill="none" stroke="#eff0f1" stroke-width="1" /></svg>
<div style="left:1289.5px;top:587.5px;width:2px;height:2px;background:#c8cbce;border-radius:1px;"></div>
<div style="left:1289.5px;top:593px;width:2px;height:2px;background:#c8cbce;border-radius:1px;"></div>
<div style="left:1313px;top:587.5px;width:2px;height:2px;background:#c8cbce;border-radius:1px;"></div>
<div style="left:1313px;top:593px;width:2px;height:2px;background:#c8cbce;border-radius:1px;"></div>
<svg style="left:1334px;top:592px;" width="6" height="6" viewBox="0 0 6 6"><path d="M3.800 .8 L2.200 4.800" fill="none" stroke="#c8cbce" stroke-width="1.8" /></svg>
<svg style="left:1364px;top:578px;" width="13" height="22" viewBox="0 0 13 22"><path d="M1 5.500 L6.200 .8 L11.400 5.500M1 15.500 L6.200 20.200 L11.400 15.500" fill="none" stroke="#464b50" stroke-width="1.3" /></svg>
<svg style="left:1387px;top:583px;" width="15" height="12" viewBox="0 0 15 12"><path d="M0 1.700h14.500M0 5.900h14.500M0 10.100h14.500" fill="none" stroke="#eff0f1" stroke-width="2.2" /></svg>
<div style="left:1063px;top:573px;width:1px;height:33px;background:#4b5055;"></div>
<div style="left:1259px;top:573px;width:1px;height:33px;background:#4b5055;"></div>
<div style="left:1413px;top:573px;width:1px;height:33px;background:#4b5055;"></div>
<svg style="left:31px;top:649px;" width="16" height="16" viewBox="0 0 16 16"><path d="M.6 .6h14.800v14.800H.6z" fill="none" stroke="#eff0f1" stroke-width="1.2" /><path d="M.6 .6h14.800v3.400H.6z" fill="#eff0f1"/><path d="M2.500 5.800h3.800v7.700h-3.800z" fill="#eff0f1"/><path d="M8 6.800h5.500M8 9.700h5.500M8 12.600h4" fill="none" stroke="#eff0f1" stroke-width="1.3" /></svg>
<div style="left:69px;top:650px;width:6px;height:6px;background:#3daee9;"></div>
<div style="left:66px;top:658px;width:13px;height:2.5px;background:#eff0f1;"></div>
<svg style="left:192px;top:654px;" width="13" height="8" viewBox="0 0 13 8"><path d="M1 1 L6.5 7 L12 1" fill="none" stroke="#d0d3d6" stroke-width="1.3" /></svg>
<svg style="left:228px;top:649px;" width="17" height="16" viewBox="0 0 17 16"><path d="M2 9v-4M4 9v-6M6 9v-3.500M8.500 9v-5M11 9V5M13.500 9V3.500M15.500 9v-3" fill="none" stroke="#eff0f1" stroke-width="1.2" /><path d="M2 10.500v4.500M4.200 10.500v4l1.800-3M12 10.500v5M15.300 10.500v5M12 11l3.300 4" fill="none" stroke="#eff0f1" stroke-width="1.3" /><path d="M1 15.500 L15.500 .8" fill="none" stroke="#eff0f1" stroke-width="1.4" /></svg>
<svg style="left:262px;top:648px;" width="18" height="18" viewBox="0 0 18 18"><path d="M3.500 2 L5.500 15.500 L8.500 11 L15 9.500z" fill="#f4f5f6"/><circle cx="3.300" cy="2" r="1.300" fill="#f4f5f6"/></svg>
<svg style="left:296px;top:649px;" width="16" height="17" viewBox="0 0 16 17"><path d="M3.500 .5 L11.500 11.500M12.500 .5 L4.500 11.500" fill="none" stroke="#eff0f1" stroke-width="1.5" /><circle cx="3.300" cy="13.300" r="2.300" fill="none" stroke="#eff0f1" stroke-width="1.4" /><circle cx="12.700" cy="13.300" r="2.300" fill="none" stroke="#eff0f1" stroke-width="1.4" /></svg>
<svg style="left:329px;top:652px;" width="18" height="10" viewBox="0 0 18 10"><path d="M1 1h4.200v7.500H1zM12.500 1h4.200v7.500h-4.200z" fill="none" stroke="#eff0f1" stroke-width="1.3" /><path d="M6 4.700h6" fill="none" stroke="#eff0f1" stroke-width="1.3" /><path d="M9.300 2.500v4.500l2.500-2.250z" fill="#eff0f1"/><path d="M7.500 3v3.500" fill="none" stroke="#eff0f1" stroke-width="1.2" /></svg>
<div style="left:607.5px;top:650px;width:6px;height:4.3px;background:#2e8fc8;"></div>
<div style="left:607.5px;top:655.3px;width:6px;height:6.5px;background:#3daee9;"></div>
<div style="left:602px;top:656.5px;width:4.6px;height:5px;background:#eff0f1;"></div>
<svg style="left:614px;top:654px;" width="8" height="9" viewBox="0 0 8 9"><path d="M.5 2.200h3v-2.200l3.800 4.500-3.800 4.500v-2.200h-3z" fill="#eff0f1"/></svg>
<div style="left:642px;top:650px;width:6px;height:6.5px;background:#3daee9;"></div>
<div style="left:642px;top:650px;width:6px;height:2px;background:#2e8fc8;"></div>
<div style="left:636.8px;top:656.8px;width:16.4px;height:4.4px;background:#eff0f1;"></div>
<div style="left:670.7px;top:656.5px;width:4.5px;height:5px;background:#eff0f1;"></div>
<svg style="left:676px;top:655.5px;" width="6" height="7" viewBox="0 0 6 7"><path d="M.5 .8 L5 6.200M5 .8 L.5 6.200" fill="none" stroke="#b5475a" stroke-width="1.7" /></svg>
<svg style="left:681px;top:654.5px;" width="8" height="9" viewBox="0 0 8 9"><path d="M7.200 2.200h-3v-2.200L.5 4.500 4.200 9v-2.200h3z" fill="#eff0f1"/></svg>
<div style="left:704.6px;top:656.5px;width:4.5px;height:5px;background:#eff0f1;"></div>
<svg style="left:710.5px;top:655.5px;" width="6" height="7" viewBox="0 0 6 7"><path d="M.5 .8 L5 6.200M5 .8 L.5 6.200" fill="none" stroke="#b5475a" stroke-width="1.7" /></svg>
<div style="left:717.3px;top:656.5px;width:4.5px;height:5px;background:#eff0f1;"></div>
<svg style="left:708px;top:660px;" width="18" height="3" viewBox="0 0 18 3"><path d="M14.500 1.500h3" fill="none" stroke="#6a6f74" stroke-width="1"  stroke-dasharray="1 1"/></svg>
<svg style="left:750px;top:647px;" width="20" height="20" viewBox="0 0 20 20"><polygon points="10.00,2.70 12.17,7.31 17.23,7.95 13.52,11.44 14.47,16.45 10.00,14.00 5.53,16.45 6.48,11.44 2.77,7.95 7.83,7.31" fill="#eff0f1" stroke="#eff0f1" stroke-width="1.2" stroke-linejoin="round"/></svg>
<svg style="left:798px;top:648px;" width="18" height="18" viewBox="0 0 18 18"><circle cx="8.800" cy="9" r="7.200" fill="#3a3338"/><path d="M8.800 1.800a7.200 7.200 0 0 0 0 14.400z" fill="#a04358"/><circle cx="8.800" cy="9" r="7.200" fill="none" stroke="#e6e7e8" stroke-width="1.3" /><path d="M7.600 5.800v6.400l5-3.200z" fill="#eff0f1"/></svg>
<svg style="left:828px;top:654px;" width="12.5" height="7.5" viewBox="0 0 12.5 7.5"><path d="M1 1 L6.25 6.5 L11.5 1" fill="none" stroke="#d0d3d6" stroke-width="1.3" /></svg>
<svg style="left:850px;top:649px;" width="22" height="16" viewBox="0 0 22 16"><path d="M1 4.500h19M1 11.500h19" fill="none" stroke="#eff0f1" stroke-width="1.2" /><path d="M13 4.500c1-1.500 4.500-1.500 6.500 0-2 1.500-5.500 1.500-6.500 0zM2.500 11.500c2-1.500 5.500-1.500 6.500 0-1 1.500-4.500 1.500-6.500 0z" fill="#eff0f1"/></svg>
<svg style="left:33px;top:704.5px;" width="24" height="14" viewBox="0 0 24 14"><path d="M1 1 L12 12.500 L23 1" fill="none" stroke="#aeb2b6" stroke-width="1.3" /></svg>
<svg style="left:127px;top:703px;" width="17" height="16" viewBox="0 0 17 16"><path d="M2.500 14.300 L14 3.200" fill="none" stroke="#94989d" stroke-width="3.2"  stroke-linecap="round"/><path d="M10.500 6.600 L14 3.200" fill="none" stroke="#b9bdc1" stroke-width="1.4"  stroke-linecap="round"/><path d="M1.500 1.500h1.400M6 1.500h1.400M3.300 5h1.400" fill="none" stroke="#aeb2b6" stroke-width="1.4" /></svg>
<svg style="left:155px;top:703px;" width="17" height="17" viewBox="0 0 17 17"><path d="M1.200 .4v16.200M15.800 .4v16.200" fill="none" stroke="#eff0f1" stroke-width="2.6" /><path d="M1 .9h15M1 8.700h15M1 16.100h15" fill="none" stroke="#eff0f1" stroke-width="1.2" /></svg>
<svg style="left:185px;top:703px;" width="13" height="17" viewBox="0 0 13 17"><path d="M.5 8.600h11.500v7.600H.5z" fill="none" stroke="#eff0f1" stroke-width="1.3" /><path d="M10.300 8.500v-3.900c0-5.200-7-5.200-7 0v1" fill="none" stroke="#eff0f1" stroke-width="1.3" /></svg>
<svg style="left:33px;top:771.5px;" width="24" height="14" viewBox="0 0 24 14"><path d="M1 1 L12 12.500 L23 1" fill="none" stroke="#aeb2b6" stroke-width="1.3" /></svg>
<svg style="left:127px;top:770px;" width="17" height="16" viewBox="0 0 17 16"><path d="M2.500 14.300 L14 3.200" fill="none" stroke="#94989d" stroke-width="3.2"  stroke-linecap="round"/><path d="M10.500 6.600 L14 3.200" fill="none" stroke="#b9bdc1" stroke-width="1.4"  stroke-linecap="round"/><path d="M1.500 1.500h1.400M6 1.500h1.400M3.300 5h1.400" fill="none" stroke="#aeb2b6" stroke-width="1.4" /></svg>
<svg style="left:155px;top:770px;" width="17" height="17" viewBox="0 0 17 17"><path d="M1.200 .4v16.200M15.800 .4v16.200" fill="none" stroke="#eff0f1" stroke-width="2.6" /><path d="M1 .9h15M1 8.700h15M1 16.100h15" fill="none" stroke="#eff0f1" stroke-width="1.2" /></svg>
<svg style="left:185px;top:770px;" width="13" height="17" viewBox="0 0 13 17"><path d="M.5 8.600h11.500v7.600H.5z" fill="none" stroke="#eff0f1" stroke-width="1.3" /><path d="M10.300 8.500v-3.900c0-5.200-7-5.200-7 0v1" fill="none" stroke="#eff0f1" stroke-width="1.3" /></svg>
<svg style="left:33px;top:838.5px;" width="24" height="14" viewBox="0 0 24 14"><path d="M1 1 L12 12.500 L23 1" fill="none" stroke="#aeb2b6" stroke-width="1.3" /></svg>
<svg style="left:127px;top:837px;" width="17" height="16" viewBox="0 0 17 16"><path d="M2.500 14.300 L14 3.200" fill="none" stroke="#94989d" stroke-width="3.2"  stroke-linecap="round"/><path d="M10.500 6.600 L14 3.200" fill="none" stroke="#b9bdc1" stroke-width="1.4"  stroke-linecap="round"/><path d="M1.500 1.500h1.400M6 1.500h1.400M3.300 5h1.400" fill="none" stroke="#aeb2b6" stroke-width="1.4" /></svg>
<svg style="left:154px;top:835.7px;" width="19" height="20" viewBox="0 0 19 20"><path d="M0 5h3.200L9.700 .300v18.400L3.200 13H0z" fill="#eff0f1"/><path d="M11.300 5c1.600 2.400 1.600 6 0 8.400" fill="none" stroke="#9da1a5" stroke-width="1.8" /><path d="M13 1.500c6.200 4.200 6.200 11.600 0 15.800" fill="none" stroke="#d0d2d4" stroke-width="1.5" /></svg>
<svg style="left:185px;top:837px;" width="13" height="17" viewBox="0 0 13 17"><path d="M.5 8.600h11.500v7.600H.5z" fill="none" stroke="#eff0f1" stroke-width="1.3" /><path d="M10.300 8.500v-3.900c0-5.200-7-5.200-7 0v1" fill="none" stroke="#eff0f1" stroke-width="1.3" /></svg>
<svg style="left:33px;top:905.5px;" width="24" height="14" viewBox="0 0 24 14"><path d="M1 1 L12 12.500 L23 1" fill="none" stroke="#aeb2b6" stroke-width="1.3" /></svg>
<svg style="left:127px;top:904px;" width="17" height="16" viewBox="0 0 17 16"><path d="M2.500 14.300 L14 3.200" fill="none" stroke="#94989d" stroke-width="3.2"  stroke-linecap="round"/><path d="M10.500 6.600 L14 3.200" fill="none" stroke="#b9bdc1" stroke-width="1.4"  stroke-linecap="round"/><path d="M1.500 1.500h1.400M6 1.500h1.400M3.300 5h1.400" fill="none" stroke="#aeb2b6" stroke-width="1.4" /></svg>
<svg style="left:154px;top:902.7px;" width="19" height="20" viewBox="0 0 19 20"><path d="M0 5h3.200L9.700 .300v18.400L3.200 13H0z" fill="#eff0f1"/><path d="M11.300 5c1.600 2.400 1.600 6 0 8.400" fill="none" stroke="#9da1a5" stroke-width="1.8" /><path d="M13 1.500c6.200 4.200 6.200 11.600 0 15.800" fill="none" stroke="#d0d2d4" stroke-width="1.5" /></svg>
<svg style="left:185px;top:904px;" width="13" height="17" viewBox="0 0 13 17"><path d="M.5 8.600h11.500v7.600H.5z" fill="none" stroke="#eff0f1" stroke-width="1.3" /><path d="M10.300 8.500v-3.900c0-5.200-7-5.200-7 0v1" fill="none" stroke="#eff0f1" stroke-width="1.3" /></svg>
<div style="left:210px;top:691px;width:45px;height:5.5px;background:#33667d;opacity:.85;"></div>
<div style="left:228px;top:691.5px;width:5px;height:5px;background:#cfe3ee;"></div>
<svg style="left:209px;top:689px;" width="6" height="6" viewBox="0 0 6 6"><path d="M0 0h5L0 5z" fill="#fff"/></svg>
<svg style="left:1612px;top:1010px;" width="18" height="12" viewBox="0 0 18 12"><path d="M1.500 5.500h15" fill="none" stroke="#c3c6c9" stroke-width="1.2" /><circle cx="1.800" cy="5.500" r="1.300" fill="#c3c6c9"/><circle cx="16.200" cy="5.500" r="1.300" fill="#c3c6c9"/><path d="M4.500 7.300h9v3.200h-9z" fill="none" stroke="#eff0f1" stroke-width="1.2" /></svg>
<svg style="left:1643px;top:1008px;" width="13" height="16" viewBox="0 0 13 16"><path d="M.7 .7h11.600v14.600H.7z" fill="none" stroke="#eff0f1" stroke-width="1.3" /><path d="M3 .7v14.600M10 .7v14.600M3 5.500h7M3 10.500h7" fill="none" stroke="#eff0f1" stroke-width="1.3" /><path d="M.7 3h2.300M.7 5.500h2.300M.7 8h2.300M.7 10.500h2.300M.7 13h2.300M10 3h2.300M10 5.500h2.300M10 8h2.300M10 10.500h2.300M10 13h2.300" fill="none" stroke="#eff0f1" stroke-width="0.9" /></svg>
<svg style="left:1670px;top:1009px;" width="15" height="14" viewBox="0 0 15 14"><path d="M.5 7 L4 2.500 L5.500 6.500 L7 7 L5.500 7.500 L4 11.500z" fill="#eff0f1"/><path d="M5 7 L8.500 5 L10 .8 L11.500 5 L14.500 7 L11.500 9 L10 13.200 L8.500 9z" fill="#eff0f1"/></svg>
<svg style="left:1697px;top:1009px;" width="16" height="15" viewBox="0 0 16 15"><path d="M1.800 1v13.500" fill="none" stroke="#eff0f1" stroke-width="1.4" /><path d="M2 1.200c3 .5 6 2.500 12 4.300-5 1.200-9 2-12 2.500z" fill="#eff0f1"/></svg>
<svg style="left:1724px;top:1008px;" width="18" height="16" viewBox="0 0 18 16"><path d="M4.200 .8v14.400" fill="none" stroke="#eff0f1" stroke-width="1.4" /><path d="M3.200 5.500h2v5h-2z" fill="#eff0f1"/><path d="M8.500 8h7" fill="none" stroke="#eff0f1" stroke-width="1.2" /><path d="M8 8l3.200-2.200v4.400z" fill="#eff0f1"/></svg>
<svg style="left:1762px;top:1009px;" width="14" height="14" viewBox="0 0 14 14"><path d="M.7 .7h12.600v12.600H.7z" fill="none" stroke="#eff0f1" stroke-width="1.3"  stroke-dasharray="3 2.200" stroke-dashoffset="1.500"/><path d="M4 4h6v6H4z" fill="none" stroke="#eff0f1" stroke-width="1.3" /></svg>
<svg style="left:1790px;top:1009px;" width="14" height="14" viewBox="0 0 14 14"><path d="M.7 .7h11.800v11.800H.7z" fill="none" stroke="#eff0f1" stroke-width="1.3" /><path d="M.7 9.500h3.300v3.300" fill="none" stroke="#eff0f1" stroke-width="1.3" /><path d="M10 3 L6 7M6 4v3.300h3.300" fill="none" stroke="#eff0f1" stroke-width="1.2" /></svg>
<svg style="left:1918px;top:1009px;" width="14" height="14" viewBox="0 0 14 14"><path d="M.7 .7h12.600v12.600H.7z" fill="none" stroke="#eff0f1" stroke-width="1.3"  stroke-dasharray="3 2.200" stroke-dashoffset="1.500"/><path d="M.7 9.500h3.600v3.600H.7z" fill="#2e323a" stroke="#eff0f1" stroke-width="1.300"/><path d="M5.500 8.500 L11 3M7.500 2.800h3.700v3.700" fill="none" stroke="#eff0f1" stroke-width="1.3" /></svg>
<svg style="left:540px;top:225px;" width="20" height="28" viewBox="0 0 20 28"><path d="M3.500 3 L3.500 20.300 L8.300 20.500 L11.700 23.800 L12.400 18.300 L16 15.400z" fill="#3a3e43" stroke="#f0f1f2" stroke-width="1.200" stroke-linejoin="round"/></svg>
</div></body></html>
